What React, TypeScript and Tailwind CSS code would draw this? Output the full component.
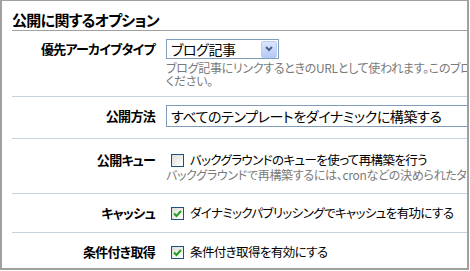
const jp = "font-['Noto_Sans_CJK_JP','Noto_Sans',sans-serif] [font-feature-settings:'palt']";

function Check({ checked }: { checked?: boolean }) {
  return (
    <span className="flex size-[13px] shrink-0 items-center justify-center border border-[#1c5180] bg-gradient-to-br from-[#dcdcd7] to-white">
      {checked && (
        <svg width="9" height="9" viewBox="0 0 9 9">
          <path d="M1 4.5 L3.5 7 L8 2" fill="none" stroke="#21a121" strokeWidth="2" />
        </svg>
      )}
    </span>
  );
}

function Row({ label, className, children }: { label: string; className?: string; children: React.ReactNode }) {
  return (
    <div className={`flex gap-[11px] border-b border-[#c5d3e0] ${className ?? ""}`}>
      <div className="w-[143px] shrink-0 text-right text-[13px] font-bold leading-[16px] tracking-[-0.7px] text-black">
        {label}
      </div>
      <div className="min-w-0 flex-1">{children}</div>
    </div>
  );
}

export default function App() {
  return (
    <div className={`h-[271px] w-[470px] bg-white ${jp}`}>
      <div className="h-[270px] w-[469px] overflow-hidden border-2 border-t border-[#a0a0a0]">
        <h2 className="ml-[10px] border-b border-[#a0a0a0] pt-[9px] text-[15px] font-bold leading-[20px] tracking-[-0.7px] text-black">
          公開に関するオプション
        </h2>

        <div className="ml-[10px]">
          <Row label="優先アーカイブタイプ" className="pt-[8px] pb-[9px] [&>div:first-child]:leading-[20px]">
            <div className="flex h-[20px] w-[113px] items-center border border-[#7f9db9] bg-white pl-[4px] pr-px">
              <span className="flex-1 text-[14px] leading-none tracking-[-0.4px] text-black">ブログ記事</span>
              <span className="flex h-[17px] w-[16px] items-center justify-center rounded-[2px] border border-[#b9cdf5] bg-gradient-to-b from-[#dbe6fd] to-[#b5c9f7]">
                <svg width="8" height="6" viewBox="0 0 8 6">
                  <path d="M1 1 L4 4 L7 1" fill="none" stroke="#4d6185" strokeWidth="2" />
                </svg>
              </span>
            </div>
            <div className="mt-[2px] whitespace-nowrap text-[12px] leading-[13px] tracking-[-0.3px] text-[#7a7a7a]">
              <div>ブログ記事にリンクするときのURLとして使われます。このブログのアーカイブタイプを選んで</div>
              <div>ください。</div>
            </div>
          </Row>

          <Row label="公開方法" className="items-center pt-[8px] pb-[11px]">
            <div className="flex h-[22px] w-[420px] items-center border border-[#7f9db9] pl-[4px] text-[14px] tracking-[-0.4px] whitespace-nowrap text-black">
              すべてのテンプレートをダイナミックに構築する
            </div>
          </Row>

          <Row label="公開キュー" className="pt-[13px] pb-[11px]">
            <label className="flex h-[16px] items-center gap-[6px] pl-[5px] text-[12.5px] tracking-[-0.6px] whitespace-nowrap text-black">
              <Check />
              バックグラウンドのキューを使って再構築を行う
            </label>
            <div className="whitespace-nowrap text-[12px] leading-[14px] tracking-[-0.3px] text-[#7a7a7a]">
              バックグラウンドで再構築するには、cronなどの決められたタイミングで実行される仕組みが必要です。
            </div>
          </Row>

          <Row label="キャッシュ" className="py-[11px]">
            <label className="flex h-[16px] items-center gap-[6px] pl-[5px] text-[12.5px] tracking-[-0.6px] whitespace-nowrap text-black">
              <Check checked />
              ダイナミックパブリッシングでキャッシュを有功にする
            </label>
          </Row>

          <Row label="条件付き取得" className="border-b-0 pt-[11px]">
            <label className="flex h-[16px] items-center gap-[6px] pl-[5px] text-[12.5px] tracking-[-0.6px] whitespace-nowrap text-black">
              <Check checked />
              条件付き取得を有効にする
            </label>
          </Row>
        </div>
      </div>
    </div>
  );
}
